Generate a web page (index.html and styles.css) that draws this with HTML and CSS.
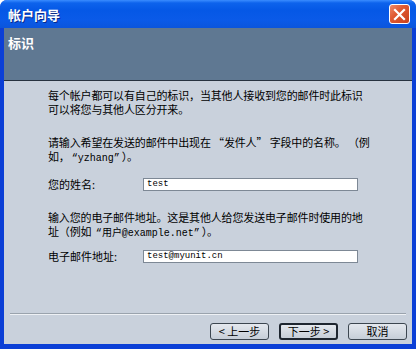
FILE: index.html
```html
<!DOCTYPE html>
<html lang="zh-CN">
<head>
<meta charset="utf-8">
<title>帐户向导</title>
<link rel="stylesheet" href="styles.css">
</head>
<body>
<div class="window">
  <div class="titlebar">
    <span class="title">帐户向导</span>
    <span class="close" aria-label="关闭">
      <svg width="13" height="13" viewBox="0 0 13 13"><path d="M2 2 L11 11 M11 2 L2 11" stroke="#fff" stroke-width="2.2" stroke-linecap="square"/></svg>
    </span>
  </div>
  <div class="frame">
    <div class="header">标识</div>
    <div class="content">
      <p class="para">每个帐户都可以有自己的标识，当其他人接收到您的邮件时此标识<br>可以将您与其他人区分开来。</p>
      <p class="para gap-lg">请输入希望在发送的邮件中出现在 “发件人” 字段中的名称。 （例<br>如，<span class="mono">“yzhang”</span>）。</p>
      <div class="field gap-md">
        <label class="label">您的姓名:</label>
        <div class="input"><span class="mono-in">test</span></div>
      </div>
      <p class="para gap-lg">输入您的电子邮件地址。这是其他人给您发送电子邮件时使用的地<br>址（例如 <span class="mono">“用户@example.net”</span>）。</p>
      <div class="field gap-sm">
        <label class="label">电子邮件地址:</label>
        <div class="input"><span class="mono-in">test@myunit.cn</span></div>
      </div>
      <div class="spacer"></div>
    </div>
    <div class="separator"></div>
    <div class="buttons">
      <div class="btn">&lt; 上一步</div>
      <div class="btn default">下一步 &gt;</div>
      <div class="btn">取消</div>
    </div>
  </div>
</div>
</body>
</html>
```
FILE: styles.css
```css
* { box-sizing: border-box; }
html, body { margin: 0; padding: 0; background: #ffffff; }
body {
  font-family: "Noto Sans CJK SC", "Liberation Sans", sans-serif;
  font-size: 11px;
  color: #000;
}
.window {
  width: 416px;
  height: 349px;
  display: flex;
  flex-direction: column;
  border-radius: 7px 7px 0 0;
  overflow: hidden;
  background: #0a46dc;
}
.titlebar {
  height: 28px;
  flex: none;
  display: flex;
  align-items: center;
  justify-content: space-between;
  padding: 0 6px 0 8px;
  background: linear-gradient(#3a8cff 0px, #0d63ec 3px, #0558e6 10px, #0a5ae8 20px, #0b55dc 28px);
}
.title {
  color: #fff;
  font-weight: bold;
  font-size: 13px;
  text-shadow: 1px 1px 0 #0a2a8a;
}
.close {
  width: 21px;
  height: 20px;
  border: 1px solid #ffffff;
  border-radius: 3px;
  background: linear-gradient(135deg, #ee8a6a 0%, #e05a32 40%, #c8401c 100%);
  display: flex;
  align-items: center;
  justify-content: center;
}
.frame {
  flex: 1;
  display: flex;
  flex-direction: column;
  border-left: 4px solid #0b3fd6;
  border-right: 4px solid #0b3fd6;
  border-bottom: 5px solid #0b3fd6;
  background: #c9d1dc;
}
.header {
  height: 53px;
  flex: none;
  background: #5f7892;
  border-bottom: 1px solid #27323f;
  color: #fff;
  font-weight: bold;
  font-size: 13px;
  padding: 8px 4px 0;
  line-height: 14px;
}
.content {
  flex: 1;
  display: flex;
  flex-direction: column;
  padding: 7px 0 0 44px;
}
.para {
  margin: 0;
  line-height: 14px;
  letter-spacing: -0.15px;
  white-space: nowrap;
}
.mono {
  font-family: "Liberation Mono", monospace;
  font-size: 10px;
  letter-spacing: 0;
  padding: 0 2px;
}
.mono-in {
  font-family: "Liberation Mono", monospace;
  font-size: 9px;
}
.gap-lg { margin-top: 19px; }
.gap-md { margin-top: 12px; }
.gap-sm { margin-top: 9px; }
.field {
  display: flex;
  align-items: center;
  height: 13px;
}
.label {
  width: 95px;
  flex: none;
  line-height: 13px;
}
.input {
  width: 215px;
  height: 13px;
  background: #fff;
  border: 1px solid #7d8895;
  padding: 0 3px;
  line-height: 11px;
  display: flex;
  align-items: center;
}
.spacer { flex: 1; }
.separator {
  height: 2px;
  margin: 0 6px 8px;
  border-top: 1px solid #9aa3ad;
  border-bottom: 1px solid #eef1f5;
}
.buttons {
  display: flex;
  justify-content: flex-end;
  gap: 10px;
  padding: 0 5px 4px 0;
}
.btn {
  width: 59px;
  height: 17px;
  border: 1px solid #3c4650;
  border-radius: 3px;
  background: linear-gradient(#e4e8ee, #c6ced8);
  display: flex;
  align-items: center;
  justify-content: center;
  font-size: 11px;
  line-height: 15px;
}
.btn.default {
  border: 2px solid #1e2630;
}
```
